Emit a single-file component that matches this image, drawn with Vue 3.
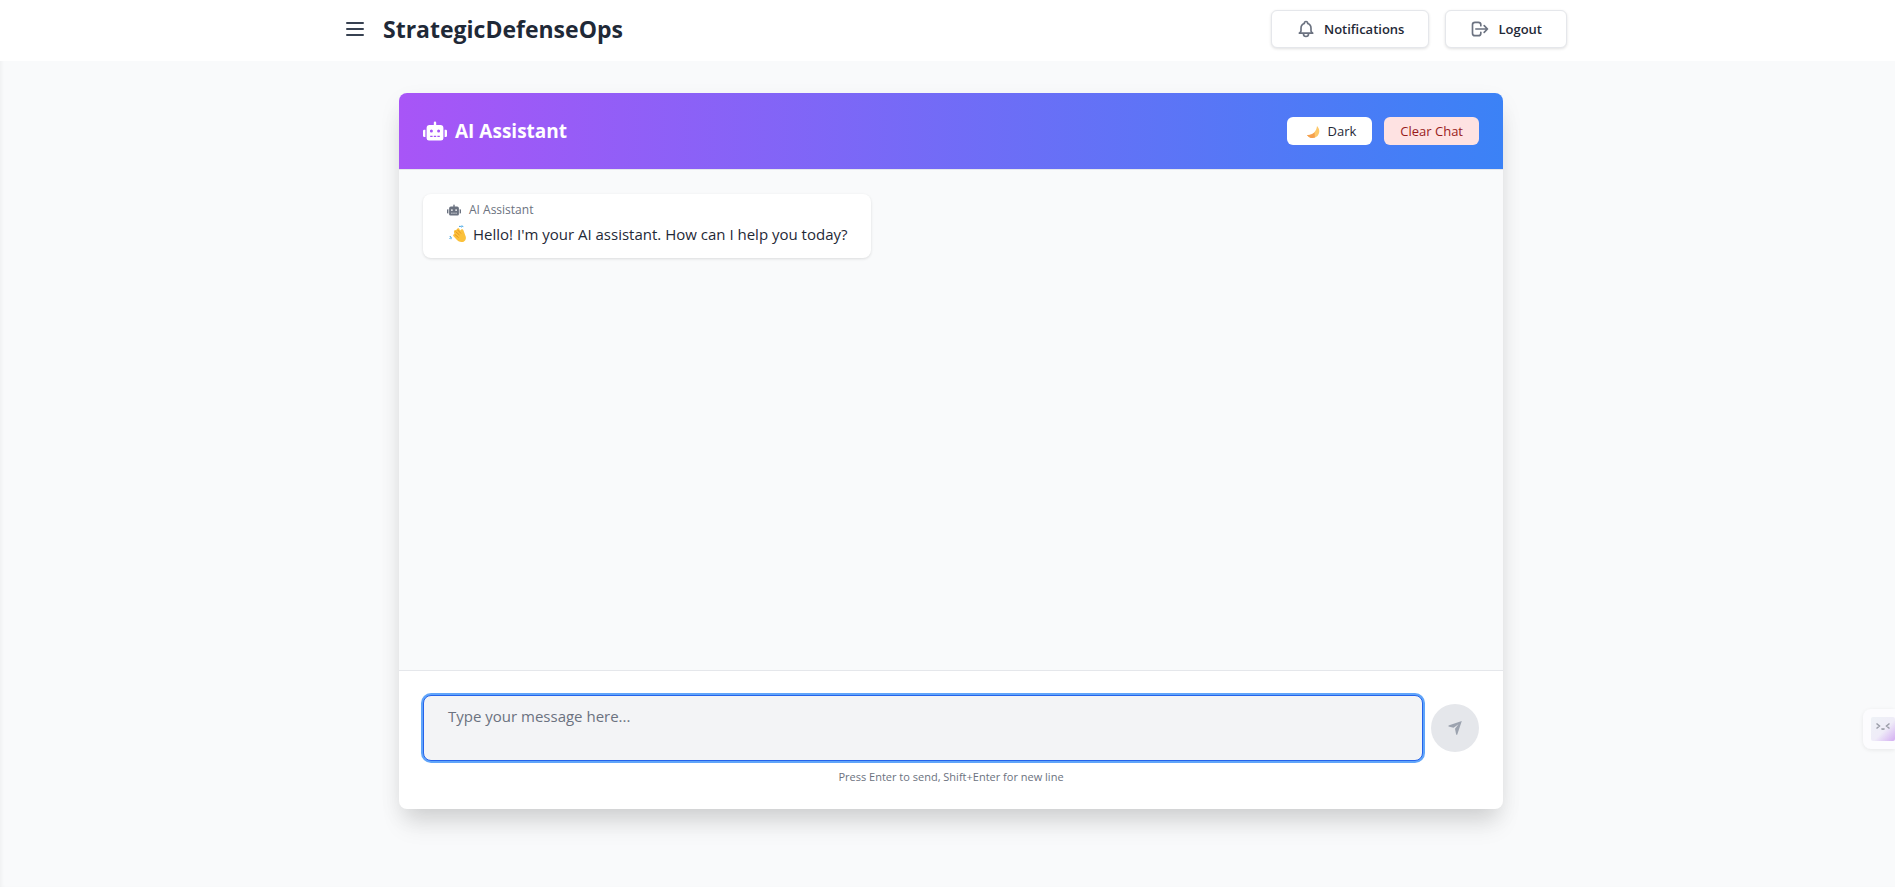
<template>
  <div class="page">
    <header class="navbar">
      <div class="navbar-inner">
        <div class="brand">
          <button class="menu-button" type="button" aria-label="Toggle menu">
            <svg viewBox="0 0 24 24" width="24" height="24" fill="none" stroke="currentColor" stroke-width="2" stroke-linecap="round">
              <path d="M4 6h16M4 12h16M4 18h16" />
            </svg>
          </button>
          <h1>StrategicDefenseOps</h1>
        </div>
        <nav class="nav-actions">
          <button class="nav-button" type="button">
            <svg viewBox="0 0 24 24" width="20" height="20" fill="none" stroke="currentColor" stroke-width="2" stroke-linecap="round" stroke-linejoin="round">
              <path d="M15 17h5l-1.405-1.405A2.032 2.032 0 0118 14.158V11a6.002 6.002 0 00-4-5.659V5a2 2 0 10-4 0v.341C7.67 6.165 6 8.388 6 11v3.159c0 .538-.214 1.055-.595 1.436L4 17h5m6 0v1a3 3 0 11-6 0v-1m6 0H9" />
            </svg>
            <span>Notifications</span>
          </button>
          <button class="nav-button" type="button">
            <svg viewBox="0 0 24 24" width="20" height="20" fill="none" stroke="currentColor" stroke-width="2" stroke-linecap="round" stroke-linejoin="round">
              <path d="M17 16l4-4m0 0l-4-4m4 4H7m6 4v1a3 3 0 01-3 3H6a3 3 0 01-3-3V7a3 3 0 013-3h4a3 3 0 013 3v1" />
            </svg>
            <span>Logout</span>
          </button>
        </nav>
      </div>
    </header>

    <main class="content">
      <section class="chat-card">
        <div class="chat-header">
          <h2>
            <svg class="robot" viewBox="0 0 640 512" width="24" height="24" fill="currentColor">
              <path :d="robotPath" />
            </svg>
            <span>AI Assistant</span>
          </h2>
          <div class="header-actions">
            <button class="theme-button" type="button" @click="isDark = !isDark">
              <svg viewBox="0 0 18 18" width="18" height="18">
                <path d="M14 4c3 3 3 7 .5 10-3.500 3-8.500 2.200-10.500-1 5 .5 9.500-3 10-9z" fill="#fdc96b" />
                <path d="M4 13c3 .3 5.500-.7 7.500-2.700l.5 5.300c-3.200 1.200-6.500.1-8-2.600z" fill="#f5a04f" />
              </svg>
              <span>{{ isDark ? 'Light' : 'Dark' }}</span>
            </button>
            <button class="clear-button" type="button" @click="clearChat">Clear Chat</button>
          </div>
        </div>

        <div class="messages">
          <div v-for="(msg, index) in messages" :key="index" class="bubble" :class="msg.role">
            <div class="bubble-label">
              <svg v-if="msg.role === 'ai'" viewBox="0 0 640 512" width="14" height="14" fill="currentColor">
                <path :d="robotPath" />
              </svg>
              <span>{{ msg.role === 'ai' ? 'AI Assistant' : 'You' }}</span>
            </div>
            <p>
              <svg v-if="msg.wave" viewBox="-2 0 20 18" width="20" height="18">
                <path d="M5 7.500C4.600 5.500 6 4.800 7 5.200L8.500 3.500c1-.8 2 0 1.800.8l1.200 1.300c.4-1.600 2.500-2 3-.2l2.200 6c.8 3-1 5.600-4 5.600-2.500 0-4-1.200-5.700-3L4.300 11c-.6-1 .3-2 1.400-1.500z" fill="#fbc13b" />
                <path d="M6.500 6.500l4 3.500M8.500 4.800l3.500 3.700M5.500 9.200l4 3.300" fill="none" stroke="#e08a1e" stroke-width=".8" />
                <path d="M10 1.500c1.200-.4 2.200 0 3 .9M12.500.8l1.800.8M1 11c.2 1.200 1 2 2 2.300M.5 13l1.200 1.200" fill="none" stroke="#2f9be0" stroke-width="1" />
              </svg>
              <span>{{ msg.content }}</span>
            </p>
          </div>
        </div>

        <form class="input-area" @submit.prevent="sendMessage">
          <div class="input-row">
            <textarea
              v-model="userInput"
              aria-label="Message"
              placeholder="Type your message here..."
              @keydown.enter.exact.prevent="sendMessage"
            ></textarea>
            <button class="send-button" type="submit" aria-label="Send" :disabled="!userInput.trim()">
              <svg viewBox="0 0 16 16" width="16" height="16" fill="currentColor">
                <path d="M14.800 1L1.500 5.500v1L6.500 7.800l5-3.500L8 8.800l1.200 6h1z" />
              </svg>
            </button>
          </div>
          <p class="hint">Press Enter to send, Shift+Enter for new line</p>
        </form>
      </section>
    </main>

    <button class="side-widget" type="button" aria-label="Open helper">
      <svg viewBox="0 0 24 24" width="24" height="24">
        <defs>
          <linearGradient id="face" x1="0" y1="0" x2="1" y2="1">
            <stop offset="0" stop-color="#eef2f6" />
            <stop offset=".55" stop-color="#efecf8" />
            <stop offset="1" stop-color="#d3adf2" />
          </linearGradient>
        </defs>
        <rect width="24" height="24" rx="2" fill="url(#face)" />
        <path d="M5.500 6.500l3 2.500-3 2.500M18.500 6.500l-3 2.500 3 2.500M10.500 11.500c.8 1 2.200 1 3 0" fill="none" stroke="#9b9ea8" stroke-width="1.500" />
      </svg>
    </button>
  </div>
</template>

<script setup>
import { ref } from 'vue'

const robotPath =
  'M32 224h32v192H32a32 32 0 01-32-32V256a32 32 0 0132-32zm512-48v272a64 64 0 01-64 64H160a64 64 0 01-64-64V176a80 80 0 0180-80h112V32a32 32 0 0164 0v64h112a80 80 0 0180 80zM264 256a40 40 0 10-40 40 40 40 0 0040-40zm-8 128h-64v32h64zm96 0h-64v32h64zm104-128a40 40 0 10-40 40 40 40 0 0040-40zm-8 128h-64v32h64zm192-128v128a32 32 0 01-32 32h-32V224h32a32 32 0 0132 32z'

const isDark = ref(false)
const userInput = ref('')
const messages = ref([
  { role: 'ai', wave: true, content: "Hello! I'm your AI assistant. How can I help you today?" },
])

function sendMessage() {
  const input = userInput.value.trim()
  if (!input) return
  messages.value.push({ role: 'user', content: input })
  userInput.value = ''
}

function clearChat() {
  messages.value = messages.value.slice(0, 1)
}
</script>

<style>
body {
  margin: 0;
  background-color: #f9fafb;
}
</style>

<style scoped>
* {
  box-sizing: border-box;
}

.page {
  min-height: 100vh;
  background-color: #f9fafb;
  box-shadow: inset 3px 0 4px -2px rgba(0, 0, 0, 0.05);
  font-family: 'Segoe UI', 'Open Sans', 'Noto Sans', sans-serif;
  color: #1f2937;
}

h1,
h2,
p {
  margin: 0;
}

button,
textarea {
  font-family: inherit;
}

button {
  cursor: pointer;
}

svg {
  display: block;
  flex-shrink: 0;
}

.navbar {
  padding: 10px 0 13px 7px;
  background-color: white;
}

.navbar-inner {
  display: flex;
  align-items: center;
  justify-content: space-between;
  max-width: 1280px;
  margin: 0 auto;
  padding: 0 24px;
}

.brand {
  display: flex;
  align-items: center;
  gap: 8px;
}

.menu-button {
  padding: 0 8px;
  border: none;
  background: none;
  color: #374151;
}

h1 {
  font-size: 23px;
  line-height: 32px;
  font-weight: 700;
}

.nav-actions {
  display: flex;
  gap: 16px;
}

.nav-button {
  display: flex;
  align-items: center;
  gap: 8px;
  height: 38px;
  padding: 0 24px;
  border: 1px solid #e5e7eb;
  border-radius: 6px;
  background-color: white;
  box-shadow: 0 1px 3px rgba(0, 0, 0, 0.12);
  color: #1f2937;
  font-size: 13px;
  font-weight: 600;
}

.nav-button svg {
  color: #6b7280;
}

.content {
  padding: 32px 24px 32px 31px;
}

.chat-card {
  max-width: 1104px;
  margin: 0 auto;
  border-radius: 8px;
  overflow: hidden;
  background-color: white;
  box-shadow: 0 20px 25px -5px rgba(0, 0, 0, 0.1), 0 8px 24px -4px rgba(0, 0, 0, 0.1);
}

.chat-header {
  display: flex;
  align-items: center;
  justify-content: space-between;
  padding: 24px;
  border-bottom: 1px solid #e5e7eb;
  background: linear-gradient(to right, #a855f7, #3b82f6) padding-box;
  color: white;
}

h2 {
  display: flex;
  align-items: center;
  gap: 8px;
  font-size: 19px;
  line-height: 28px;
  font-weight: 700;
}

.header-actions {
  display: flex;
  gap: 12px;
}

.theme-button,
.clear-button {
  display: flex;
  align-items: center;
  gap: 6px;
  height: 28px;
  padding: 0 16px;
  border: none;
  border-radius: 6px;
  font-size: 13px;
}

.theme-button {
  background-color: white;
  color: #1f2937;
}

.clear-button {
  background-color: #fee2e2;
  color: #991b1b;
}

.messages {
  display: flex;
  flex-direction: column;
  align-items: flex-start;
  gap: 16px;
  height: 500px;
  padding: 24px;
  overflow-y: auto;
  background-color: #f9fafb;
}

.bubble {
  padding: 8px 24px 12px;
  border-radius: 8px;
  background-color: white;
  box-shadow: 0 1px 3px rgba(0, 0, 0, 0.12);
}

.bubble.user {
  align-self: flex-end;
}

.bubble-label {
  display: flex;
  align-items: center;
  gap: 8px;
  margin-bottom: 4px;
  color: #6b7280;
  font-size: 12px;
  line-height: 16px;
}

.bubble p {
  display: flex;
  align-items: center;
  gap: 6px;
  font-size: 15px;
  line-height: 24px;
}

.input-area {
  padding: 24px;
  border-top: 1px solid #e5e7eb;
}

.input-row {
  display: flex;
  align-items: center;
  gap: 8px;
}

textarea {
  flex: 1;
  height: 66px;
  padding: 8px 24px;
  border: 1px solid #2563eb;
  border-radius: 8px;
  outline: none;
  box-shadow: 0 0 0 2px #60a5fa;
  background-color: #f3f4f6;
  color: #1f2937;
  font-size: 15px;
  line-height: 24px;
  resize: none;
}

textarea::placeholder {
  color: #6b7280;
}

.send-button {
  display: flex;
  align-items: center;
  justify-content: center;
  width: 48px;
  height: 48px;
  padding: 0;
  border: none;
  border-radius: 50%;
  background-color: #e5e7eb;
  color: #9ca3af;
}

.hint {
  margin-top: 8px;
  color: #6b7280;
  font-size: 11px;
  line-height: 16px;
  text-align: center;
}

/* helper tab pinned to the window edge */
.side-widget {
  position: fixed;
  right: 0;
  bottom: 138px;
  padding: 8px 0 8px 8px;
  border: none;
  border-radius: 8px 0 0 8px;
  background-color: #fcfcfe;
  box-shadow: 0 1px 4px rgba(0, 0, 0, 0.08);
}
</style>
